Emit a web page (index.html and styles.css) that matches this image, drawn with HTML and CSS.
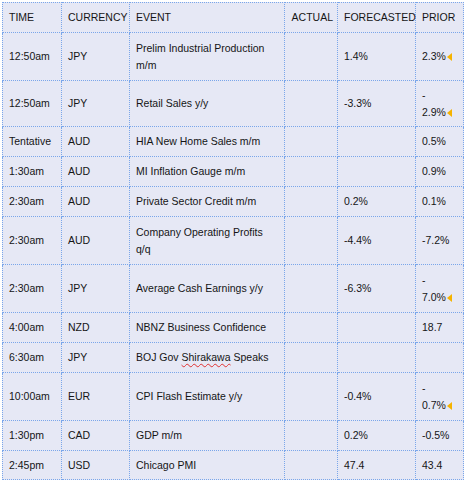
FILE: index.html
```html
<!DOCTYPE html>
<html lang="en">
<head>
    <meta charset="UTF-8">
    <meta name="viewport" content="width=device-width, initial-scale=1.0">
    <title>Economic Calendar</title>

    <link rel="stylesheet" href="styles.css">
</head>
<body>

    <table class="calendar">
        <colgroup>
            <col class="c-time">
            <col class="c-cur">
            <col class="c-event">
            <col class="c-actual">
            <col class="c-fore">
            <col class="c-prior">
        </colgroup>
        <tr class="head">
            <td>TIME</td><td>CURRENCY</td><td>EVENT</td><td class="right">ACTUAL</td><td>FORECASTED</td><td>PRIOR</td>
        </tr>
        <tr class="tall">
            <td>12:50am</td><td>JPY</td><td>Prelim Industrial Production m/m</td><td></td><td>1.4%</td>
            <td>2.3%<span class="rev"></span></td>
        </tr>
        <tr class="tall2">
            <td>12:50am</td><td>JPY</td><td>Retail Sales y/y</td><td></td><td>-3.3%</td>
            <td>-<br>2.9%<span class="rev"></span></td>
        </tr>
        <tr class="short">
            <td>Tentative</td><td>AUD</td><td>HIA New Home Sales m/m</td><td></td><td></td><td>0.5%</td>
        </tr>
        <tr class="short">
            <td>1:30am</td><td>AUD</td><td>MI Inflation Gauge m/m</td><td></td><td></td><td>0.9%</td>
        </tr>
        <tr class="short">
            <td>2:30am</td><td>AUD</td><td>Private Sector Credit m/m</td><td></td><td>0.2%</td><td>0.1%</td>
        </tr>
        <tr class="tall">
            <td>2:30am</td><td>AUD</td><td>Company Operating Profits q/q</td><td></td><td>-4.4%</td><td>-7.2%</td>
        </tr>
        <tr class="tall">
            <td>2:30am</td><td>JPY</td><td>Average Cash Earnings y/y</td><td></td><td>-6.3%</td>
            <td>-<br>7.0%<span class="rev"></span></td>
        </tr>
        <tr class="short">
            <td>4:00am</td><td>NZD</td><td>NBNZ Business Confidence</td><td></td><td></td><td>18.7</td>
        </tr>
        <tr class="short">
            <td>6:30am</td><td>JPY</td><td>BOJ Gov <span class="typo">Shirakawa</span> Speaks</td><td></td><td></td><td></td>
        </tr>
        <tr class="tall">
            <td>10:00am</td><td>EUR</td><td>CPI Flash Estimate y/y</td><td></td><td>-0.4%</td>
            <td>-<br>0.7%<span class="rev"></span></td>
        </tr>
        <tr class="short">
            <td>1:30pm</td><td>CAD</td><td>GDP m/m</td><td></td><td>0.2%</td><td>-0.5%</td>
        </tr>
        <tr class="last">
            <td>2:45pm</td><td>USD</td><td>Chicago PMI</td><td></td><td>47.4</td><td>43.4</td>
        </tr>
    </table>

</body>
</html>
```

FILE: styles.css
```css
* {
    box-sizing: border-box;
    margin: 0;
    padding: 0;
}
body {
    background: #ffffff;
    padding: 2px 0 0 2px;
    font-family: "Liberation Sans", Arial, sans-serif;
    font-size: 10.5px;
    color: #151515;
}
.calendar {
    table-layout: fixed;
    border-collapse: collapse;
    width: 462px;
    background: #e6e8f5;
}
.calendar td {
    border: 1px dotted #7aa6ea;
    padding: 0 4px 0 6px;
    vertical-align: middle;
    line-height: 17px;
}
.c-time { width: 59px; }
.c-cur { width: 68px; }
.c-event { width: 155px; }
.c-actual { width: 53px; }
.c-fore { width: 78px; }
.c-prior { width: 48px; }

.head td { height: 30px; }
.head .right { text-align: right; }
.tall td { height: 48px; }
.tall2 td { height: 46px; }
.short td { height: 30px; }
.last td { height: 29px; }

.rev {
    display: inline-block;
    width: 0;
    height: 0;
    margin-left: 1px;
    border-top: 4px solid transparent;
    border-bottom: 4px solid transparent;
    border-right: 5px solid #f5b300;
    vertical-align: -1px;
}
.typo {
    text-decoration: underline wavy #e03030;
    text-decoration-thickness: 1px;
    text-underline-offset: 2px;
}
```
